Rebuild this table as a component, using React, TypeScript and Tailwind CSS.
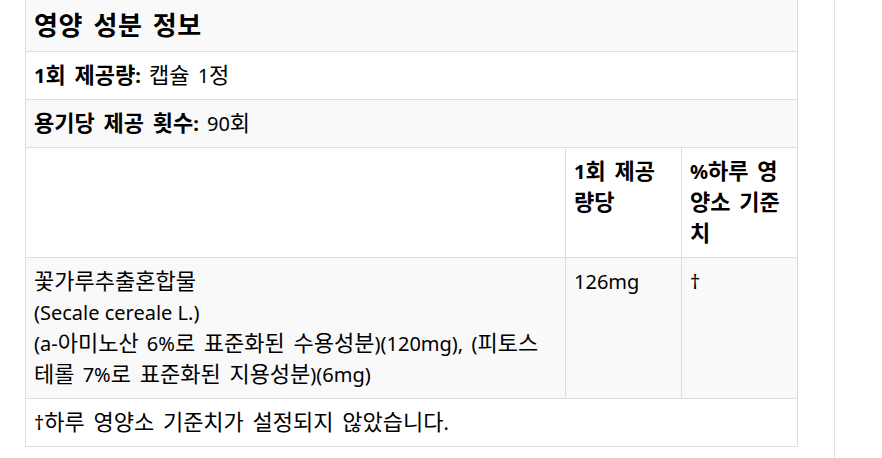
import React from "react";

const cell = "border border-[#dddddd] pl-[8px] pr-[10px] py-[8px] align-top text-left";

const HANGUL = /([\uAC00-\uD7A3]+(?:\s+[\uAC00-\uD7A3]+)*)/;

function K({ t }: { t: string }) {
  const parts = t.split(HANGUL);
  return (
    <>
      {parts.map((p, i) =>
        i % 2 === 1 ? (
          <span key={i} className="text-[22px] leading-none">
            {p}
          </span>
        ) : (
          <React.Fragment key={i}>{p}</React.Fragment>
        )
      )}
    </>
  );
}

export default function App() {
  return (
    <div
      className="flex h-[458px] w-[882px] overflow-hidden bg-white text-black"
      style={{ fontFamily: '"Noto Sans", "Noto Sans CJK KR", sans-serif' }}
    >
      <div className="w-[25px] shrink-0" />
      <div className="w-[772px] shrink-0">
        <table className="w-[772px] table-fixed border-collapse text-[20px] leading-[31px] [word-spacing:3px]">
          <colgroup>
            <col className="w-[540px]" />
            <col className="w-[116px]" />
            <col className="w-[116px]" />
          </colgroup>
          <tbody>
            <tr className="bg-[#f9f9f9]">
              <td
                colSpan={3}
                className="border-x border-b border-[#dddddd] pl-[8px] pr-[10px] py-[8px] text-[26px] font-bold leading-[35px] tracking-[0.6px]"
              >
                영양 성분 정보
              </td>
            </tr>
            <tr className="bg-white">
              <td colSpan={3} className={cell}>
                <span className="font-bold">
                  <K t="1회 제공량:" />
                </span>{" "}
                <K t="캡슐 1정" />
              </td>
            </tr>
            <tr className="bg-[#f9f9f9]">
              <td colSpan={3} className={cell}>
                <span className="font-bold">
                  <K t="용기당 제공 횟수:" />
                </span>{" "}
                <K t="90회" />
              </td>
            </tr>
            <tr className="bg-white">
              <th className={cell}></th>
              <th className={`${cell} font-bold`}>
                <K t="1회 제공량당" />
              </th>
              <th className={`${cell} font-bold`}>
                <K t="%하루 영양소 기준치" />
              </th>
            </tr>
            <tr className="bg-[#f9f9f9]">
              <td className={cell}>
                <K t="꽃가루추출혼합물" />
                <br />
                <span className="[word-spacing:0px]">(Secale cereale L.)</span>
                <br />
                <K t="(a-아미노산 6%로 표준화된 수용성분)(120mg), (피토스테롤 7%로 표준화된 지용성분)(6mg)" />
              </td>
              <td className={cell}>126mg</td>
              <td className={cell}>†</td>
            </tr>
            <tr className="bg-white">
              <td colSpan={3} className={cell}>
                <K t="†하루 영양소 기준치가 설정되지 않았습니다." />
              </td>
            </tr>
          </tbody>
        </table>
      </div>
      <div className="w-[37px] shrink-0" />
      <div className="h-[458px] w-px shrink-0 bg-[#e3e3e3]" />
    </div>
  );
}
